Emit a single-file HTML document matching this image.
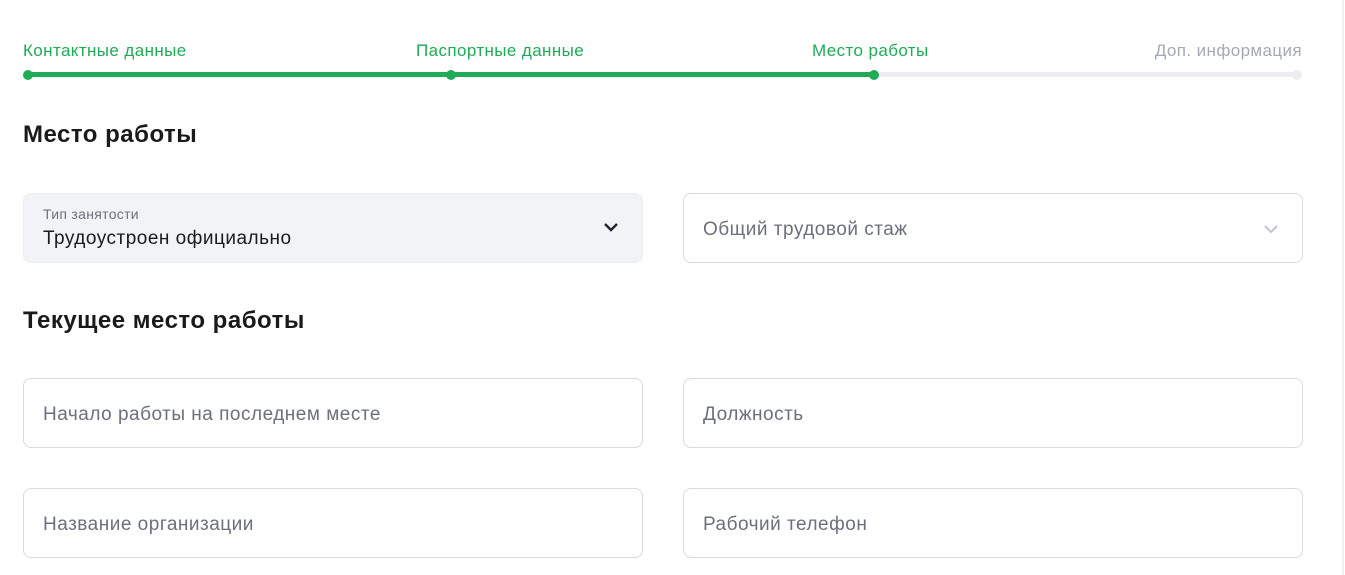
<!DOCTYPE html>
<html><head><meta charset="utf-8"><style>
*{box-sizing:border-box;margin:0;padding:0}
body{width:1345px;height:575px;background:#fff;font-family:"Liberation Sans",sans-serif;position:relative;overflow:hidden}
.a{position:absolute}
.step{top:41px;font-size:17px;letter-spacing:0.4px;color:#1fab57;white-space:nowrap}
.h{font-weight:bold;font-size:24px;letter-spacing:0.5px;color:#1a1a1a;left:23px}
.box{border:1px solid #d8dadf;border-radius:8px;width:620px;height:70px;font-size:19px;letter-spacing:0.5px;color:#6b7079;padding-left:19px;line-height:71px}
.dot{width:10px;height:10px;border-radius:50%;top:70px;background:#1fab57}
</style></head><body>
<div class="a step" style="left:23px">Контактные данные</div>
<div class="a step" style="left:416px">Паспортные данные</div>
<div class="a step" style="left:812px">Место работы</div>
<div class="a step" style="right:43px;color:#a4a9b5">Доп. информация</div>
<div class="a" style="left:28px;top:72px;width:1270px;height:5px;background:#eceef1;border-radius:3px"></div>
<div class="a" style="left:28px;top:72px;width:846px;height:5px;background:#1fab57"></div>
<div class="a dot" style="left:23px"></div>
<div class="a dot" style="left:446px"></div>
<div class="a dot" style="left:869px"></div>
<div class="a dot" style="left:1292px;background:#eceef1"></div>
<div class="a" style="left:1342px;top:0;width:2px;height:575px;background:#eef0f3"></div>
<div class="a h" style="top:121px">Место работы</div>
<div class="a box" style="left:23px;top:193px;background:#f2f3f7;border-color:#eceef2;line-height:normal;color:#1a1a1a">
<div style="font-size:14px;letter-spacing:0.3px;color:#6b7079;margin-top:12px">Тип занятости</div>
<div style="margin-top:6px">Трудоустроен официально</div>
<svg class="a" style="left:578px;top:27px" width="18" height="12" viewBox="0 0 18 12"><path d="M3 3l6 6 6-6" fill="none" stroke="#1f2430" stroke-width="2.4"/></svg>
</div>
<div class="a box" style="left:683px;top:193px">Общий трудовой стаж
<svg class="a" style="left:578px;top:29px" width="18" height="12" viewBox="0 0 18 12"><path d="M3 3l6 6 6-6" fill="none" stroke="#c2c5cc" stroke-width="2"/></svg></div>
<div class="a h" style="top:307px">Текущее место работы</div>
<div class="a box" style="left:23px;top:378px">Начало работы на последнем месте</div>
<div class="a box" style="left:683px;top:378px">Должность</div>
<div class="a box" style="left:23px;top:488px">Название организации</div>
<div class="a box" style="left:683px;top:488px">Рабочий телефон</div>
</body></html>
